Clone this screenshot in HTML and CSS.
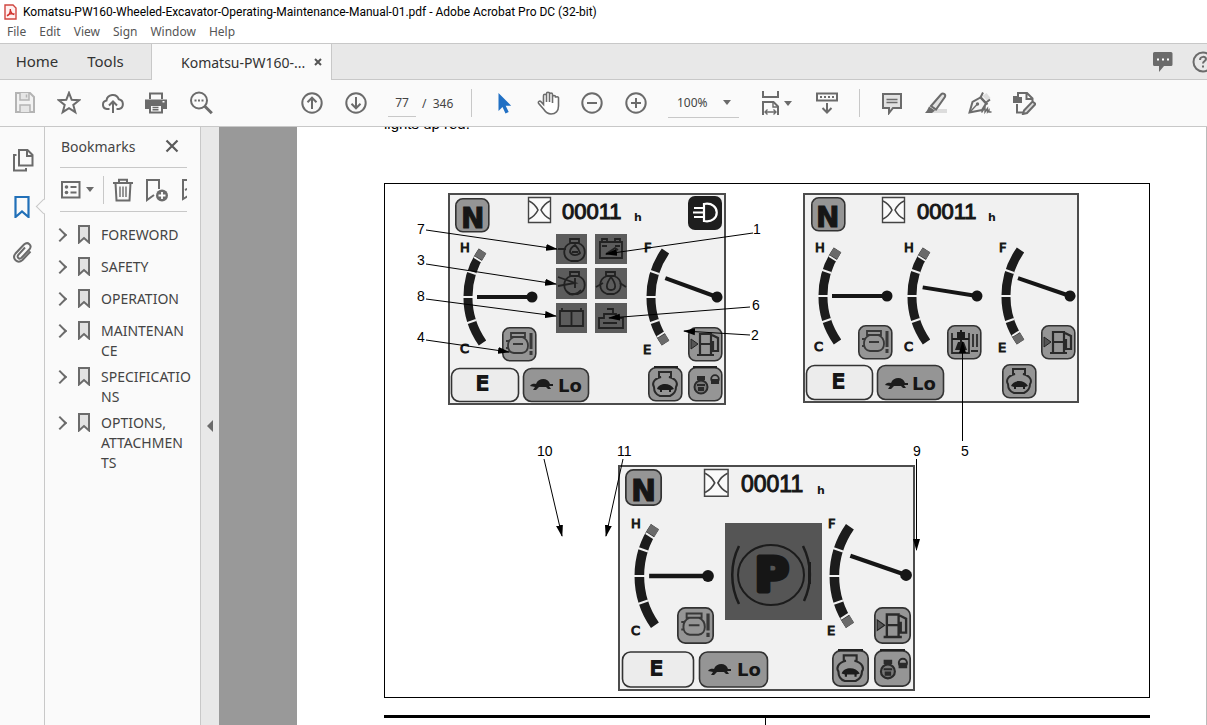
FILE: index.html
```html
<!DOCTYPE html>
<html lang="en">
<head>
<meta charset="utf-8">
<title>Komatsu-PW160-Wheeled-Excavator-Operating-Maintenance-Manual-01.pdf - Adobe Acrobat Pro DC (32-bit)</title>
<link rel="stylesheet" href="styles.css">
</head>
<body>
<div class="app">
  <header class="titlebar">
    <svg class="app-icon" width="13" height="16" viewBox="0 0 13 16"><path d="M1 1h8l3 3v11H1z" fill="#fff0f0" stroke="#d0453f" stroke-width="1.4"/><path d="M3 12c2-1 3.500-4 3.300-7M6.300 5c0 3 2 5.500 4 5.500M3 11.500c2-1.500 5-2.200 7.500-1.500" fill="none" stroke="#d0302a" stroke-width="1.300"/></svg>
    <span>Komatsu-PW160-Wheeled-Excavator-Operating-Maintenance-Manual-01.pdf - Adobe Acrobat Pro DC (32-bit)</span>
  </header>
  <nav class="menubar" aria-label="Menu">
    <button>File</button><button>Edit</button><button>View</button><button>Sign</button><button>Window</button><button>Help</button>
  </nav>
  <div class="tabbar">
    <button class="home">Home</button>
    <button class="tools">Tools</button>
    <div class="doc-tab">
      <button class="doc-name">Komatsu-PW160-...</button>
      <button class="tab-close" aria-label="Close tab"><svg width="8" height="8" viewBox="0 0 8 8"><path d="M1 1l6 6M7 1L1 7" stroke="#555" stroke-width="2"/></svg></button>
    </div>
    <div class="tab-actions">
      <button aria-label="Comments"><svg width="22" height="22" viewBox="0 0 22 22"><path d="M2 1h17a1.500 1.500 0 0 1 1.500 1.500v11A1.500 1.500 0 0 1 19 15h-7l-5 6v-6H2.500A1.500 1.500 0 0 1 1 13.500v-11A1.500 1.500 0 0 1 2.500 1z" fill="#6b6b6b"/><path d="M5 7.500h2v2H5zM10 7.500h2v2h-2zM15 7.500h2v2h-2z" fill="#fff"/></svg></button>
      <button aria-label="Help"><svg width="22" height="22" viewBox="0 0 22 22"><circle cx="11" cy="11" r="9.500" fill="none" stroke="#6b6b6b" stroke-width="2"/><path d="M8 9c0-4 6-4 6-1 0 2-3 2-3 4.500M11 14.500v2" fill="none" stroke="#6b6b6b" stroke-width="2"/></svg></button>
    </div>
  </div>

  <div class="toolbar" role="toolbar">
    <div class="group file-group">
      <button class="tool" aria-label="Save"><svg class="ico" viewBox="0 0 24 24"><path d="M3 2h14l4 4v15H3z" fill="#f2f2f2" stroke="#b4b4b4" stroke-width="2"/><path d="M7 2v7h9V2M7 21v-7h10v7" fill="#e6e6e6" stroke="#b4b4b4" stroke-width="1.500"/><path d="M13.500 3.500v3" stroke="#b4b4b4" stroke-width="1.500"/></svg></button>
      <button class="tool" aria-label="Star"><svg class="ico" viewBox="0 0 24 24"><path class="line" d="M12 1.800l2.700 7 7.500.4-5.900 4.700 2 7.300L12 17.100l-6.300 4.100 2-7.300-5.900-4.700 7.500-.4z"/></svg></button>
      <button class="tool" aria-label="Upload"><svg class="ico" viewBox="0 0 24 24"><path class="line" d="M8.500 18H5.800A4.300 4.300 0 0 1 5.500 9.500 6.300 6.300 0 0 1 17.700 8.200 5 5 0 0 1 18 18h-2.500M12 22V11M8 14.500l4-4 4 4"/></svg></button>
      <button class="tool" aria-label="Print"><svg class="ico" viewBox="0 0 24 24"><path class="fill" d="M4 1.500h14V8H4zM0 8.500h22V18h-4v-4.500H4V18H0z"/><path d="M6 3.500h10V8H6z" fill="#fafafa"/><path d="M5 14h12v7.500H5z" fill="#fafafa" stroke="#6b6b6b" stroke-width="2"/><path class="thin" d="M7.500 16.500h6M7.500 18.800h6"/><path d="M17.500 10h2v1.500h-2z" fill="#fff"/></svg></button>
      <button class="tool" aria-label="Search"><svg class="ico" viewBox="0 0 24 24"><circle class="line" cx="10" cy="9.500" r="8"/><path d="M15.800 15.300l7 7" stroke="#6b6b6b" stroke-width="3"/><path class="fill" d="M5.500 8.500h2v2h-2zM9 8.500h2v2H9zM12.500 8.500h2v2h-2z"/></svg></button>
    </div>
    <div class="group">
      <button class="tool" aria-label="Previous page"><svg class="ico" viewBox="0 0 24 24"><circle class="line" cx="12" cy="12" r="9.700"/><path class="line" d="M12 18V7M7.500 11.200L12 6.700l4.500 4.500"/></svg></button>
      <button class="tool" aria-label="Next page"><svg class="ico" viewBox="0 0 24 24"><circle class="line" cx="12" cy="12" r="9.700"/><path class="line" d="M12 6v11M7.500 12.800l4.500 4.500 4.500-4.500"/></svg></button>
    </div>
    <label class="page-field"><input type="text" value="77" aria-label="Page number"><span>/&nbsp; 346</span></label>
    <span class="divider"></span>
    <div class="group">
      <button class="tool" aria-label="Select"><svg class="ico" viewBox="0 0 24 24"><path d="M6.500 2v18l4-4 3 6.500 3.200-1.500-3-6.200h5.500z" fill="#2170c4"/></svg></button>
      <button class="tool" aria-label="Hand"><svg class="ico" viewBox="0 0 24 24"><path class="hand" d="M7.500 13.500V4.800c0-2 3-2 3 0V11 2.800c0-2 3-2 3 0V11 3.500c0-2 3-2 3 0V12 6c0-2 3-2 3 0l.5 0c2-.8 2.800.3 2.500 2V15c0 5-3 8-7.500 8-4 0-5.500-2-7.500-5l-5-5.800c-.8-1.500 1.200-2.700 2.500-1.500z"/></svg></button>
      <button class="tool" aria-label="Zoom out"><svg class="ico" viewBox="0 0 24 24"><circle class="line" cx="12" cy="12" r="9.700"/><path class="line" d="M7 12h10"/></svg></button>
      <button class="tool" aria-label="Zoom in"><svg class="ico" viewBox="0 0 24 24"><circle class="line" cx="12" cy="12" r="9.700"/><path class="line" d="M7 12h10M12 7v10"/></svg></button>
    </div>
    <div class="zoom-field"><select aria-label="Zoom level"><option>100%</option></select><span class="caret"></span></div>
    <button class="tool fit" aria-label="Fit width"><svg class="ico" viewBox="0 0 24 24"><path class="line" d="M4 0v6h15V0M4 24V11h10.500l4.500 4.500V24"/><path class="thin" d="M14 11v5h5M6 21h11M8.500 18.500L6 21l2.500 2.500M14.500 18.500L17 21l-2.500 2.500"/></svg><span class="caret"></span></button>
    <button class="tool" aria-label="Read mode"><svg class="ico" viewBox="0 0 24 24"><path class="line" d="M2 2.500h20v7H2zM12 12v9M7.500 17l4.500 4.500 4.500-4.500"/><path class="fill" d="M5 5h2v2H5zM9 5h2v2H9zM13 5h2v2h-2zM17 5h2v2h-2z"/></svg></button>
    <span class="divider"></span>
    <div class="group">
      <button class="tool" aria-label="Comment"><svg class="ico" viewBox="0 0 24 24"><path d="M3 3h18v14h-8l-4 5v-5H3z" fill="#e2e2e2" stroke="#6b6b6b" stroke-width="2"/><path class="thin" d="M6.500 8.500h11M6.500 11.500h11"/></svg></button>
      <button class="tool" aria-label="Highlight"><svg class="ico" viewBox="0 0 24 24"><path d="M10 18h13v4H8z" fill="#dcdcdc"/><path d="M7 15L17 3.500c2-2 5-.3 4 2.300L12 18.500z" fill="#e2e2e2" stroke="#6b6b6b" stroke-width="2"/><path class="fill" d="M5 15.500l6 4-3 2.500H1l2-2.500z"/></svg></button>
      <button class="tool" aria-label="Sign"><svg class="ico" viewBox="0 0 24 24"><path d="M14.500 5l4-3 4 5-3 3z" fill="#ddd"/><path d="M1.500 21.500l3-10.500 8-4.500 5.500 6-4 6.500z" fill="#f4f4f4" stroke="#6b6b6b" stroke-width="2"/><path class="line" d="M12.500 6.500L15 1.500M17.500 12l4.500-3.500M12 5.500l7.500 8"/><path class="thin" d="M2 21l7-7.500"/><circle class="fill" cx="9.500" cy="13" r="1.700"/><path class="thin" d="M13.500 21.500l3.500-5v4.500l2.500-3.500v3.500l1.500-2v2h2.500"/></svg></button>
      <button class="tool" aria-label="Edit tools"><svg class="ico" viewBox="0 0 24 24"><path class="line" d="M6 6V2h9l5.500 5.500V10M14.500 2.500V8h5.500M5 13v8.500h6"/><path class="fill" d="M1 5h5l1 1h3v6H1z"/><path d="M12 19.500l8.500-9 3 2.500-8.500 9-4 1z" fill="#ddd" stroke="#6b6b6b" stroke-width="2"/></svg></button>
    </div>
  </div>

  <div class="workspace">
    <nav class="rail" aria-label="Panels">
      <button aria-label="Page thumbnails"><svg class="ico" viewBox="0 0 24 24"><path class="line" d="M9 2h8.500l5 5v10.500H9zM17 2.500V8h5.500M6.500 7H4v15.500h12V20"/></svg></button>
      <button class="current" aria-label="Bookmarks"><svg class="ico" viewBox="0 0 24 24"><path d="M5.500 3h13v20L12 17.500 5.500 23z" fill="#fafafa" stroke="#2170b8" stroke-width="2.200"/></svg></button>
      <button aria-label="Attachments"><svg class="ico" viewBox="0 0 24 24"><path class="line" d="M20.500 11.500L12.500 20c-5 4.500-11-1.500-7-6.500l8.500-9c4-3.500 8.500 1 5.500 4.800l-8 8.500c-2.500 2-5-.5-3.200-3l6.700-7.300"/></svg></button>
    </nav>
    <aside class="panel">
      <div class="panel-head"><h2>Bookmarks</h2><button aria-label="Close panel"><svg width="14" height="14" viewBox="0 0 14 14"><path d="M1.500 1.500l11 11M12.500 1.500l-11 11" stroke="#5a5a5a" stroke-width="2.200"/></svg></button></div>
      <div class="panel-tools">
        <button class="options" aria-label="Options"><svg width="20" height="18" viewBox="0 0 20 18"><path class="line" d="M1 1h17.500v15.500H1z"/><circle class="fill" cx="5.500" cy="6" r="1.800"/><circle class="fill" cx="5.500" cy="11.500" r="1.800"/><path class="line" d="M9.500 6h6M9.500 11.500h6"/></svg><span class="caret"></span></button>
        <span class="sep"></span>
        <button aria-label="Delete"><svg width="20" height="24" viewBox="0 0 20 24"><path class="line" d="M0 5h20M6 5V1.800h8V5M2.500 5l1 17.500h13l1-17.500"/><path class="thin" d="M7 8.500V19M10 8.500V19M13 8.500V19"/></svg></button>
        <button class="add" aria-label="New bookmark"><svg width="24" height="24" viewBox="0 0 24 24"><path class="line" d="M9 17l-7 5V2h12v9"/><circle class="fill" cx="17" cy="17.500" r="6"/><path d="M13.500 17.500h7M17 14v7" stroke="#fff" stroke-width="1.800"/></svg></button>
        <button class="find" aria-label="Find bookmark"><svg width="16" height="24" viewBox="0 0 16 24"><path class="line" d="M8 17l-7 4V2h12v9M3 12l4-2"/></svg></button>
      </div>
      <ul class="tree">
        <li><button class="twist" aria-label="Expand"></button><svg class="mark" viewBox="0 0 12 19"><path d="M1 1h10v16.500l-5-4.500-5 4.500z"/></svg><a href="#">FOREWORD</a></li>
        <li><button class="twist" aria-label="Expand"></button><svg class="mark" viewBox="0 0 12 19"><path d="M1 1h10v16.500l-5-4.500-5 4.500z"/></svg><a href="#">SAFETY</a></li>
        <li><button class="twist" aria-label="Expand"></button><svg class="mark" viewBox="0 0 12 19"><path d="M1 1h10v16.500l-5-4.500-5 4.500z"/></svg><a href="#">OPERATION</a></li>
        <li><button class="twist" aria-label="Expand"></button><svg class="mark" viewBox="0 0 12 19"><path d="M1 1h10v16.500l-5-4.500-5 4.500z"/></svg><a href="#">MAINTENAN<wbr>CE</a></li>
        <li><button class="twist" aria-label="Expand"></button><svg class="mark" viewBox="0 0 12 19"><path d="M1 1h10v16.500l-5-4.500-5 4.500z"/></svg><a href="#">SPECIFICATIO<wbr>NS</a></li>
        <li><button class="twist" aria-label="Expand"></button><svg class="mark" viewBox="0 0 12 19"><path d="M1 1h10v16.500l-5-4.500-5 4.500z"/></svg><a href="#">OPTIONS, ATTACHMEN<wbr>TS</a></li>
      </ul>
    </aside>
    <button class="collapse" aria-label="Collapse panel"></button>
    <main class="viewer">
      <article class="sheet">
        <p>lights up red.</p>
        <svg class="figure" viewBox="384 183 766 515" role="img" aria-label="Monitor panel displays">
          <defs>
            <marker id="tip" markerUnits="userSpaceOnUse" markerWidth="12" markerHeight="8" refX="11" refY="4" orient="auto"><path d="M0 .5L12 4 0 7.500z"/></marker>
            <g id="arc">
              <path d="M-65.500-46A80 80 0 0 0-65.500 46" fill="none" stroke="#1c1c1c" stroke-width="9"/>
              <path d="M-72-23l-10-3.500M-74 0h-12M-72 23l-10 3.500" stroke="#f1f1f1" stroke-width="2"/>
            </g>
            <g id="gauge-hot"><use href="#arc"/><path d="M-65.500-46l-4.200 7" stroke="#6a6a6a" stroke-width="9"/><path d="M-66-35l-8-5" stroke="#f1f1f1" stroke-width="2"/></g>
            <g id="gauge-fuel"><use href="#arc"/><path d="M-65.500 46l-4.200-7" stroke="#6a6a6a" stroke-width="9"/><path d="M-66 35l-8 5" stroke="#f1f1f1" stroke-width="2"/></g>
            <g id="needle"><path d="M-55 0H0" stroke="#161616" stroke-width="4"/><circle r="5.500" fill="#161616"/></g>
            <rect id="key" x=".8" y=".8" width="33" height="33" rx="7" fill="#959595" stroke="#333" stroke-width="1.600"/>
            <g id="hourglass" fill="none" stroke="#444"><path d="M.5.5h22v25H.5z" stroke-width="1.400" fill="#fafafa"/><path d="M1 4c4 2 7 5 9 9-2 4-5 7-9 9M22 4c-4 2-7 5-9 9 2 4 5 7 9 9" stroke-width="1.600"/></g>
            <g id="temp"><use href="#key"/><path d="M9 6h14v4H9zM12 10c-8 3-8 15 0 16h8c8-1 8-13 0-16M4 14h3M4 21h3M11 17h10" fill="none" stroke="#383838" stroke-width="1.800"/><path d="M29 6v16M29 24v4" stroke="#383838" stroke-width="3"/></g>
            <g id="oil"><use href="#key"/><path d="M5 8v20h17V8M24 26h7M26 9v13M30 9v13" fill="none" stroke="#2a2a2a" stroke-width="1.800"/><path d="M10 7h8v6h-8zM11 17h6l3 8H8z" fill="#1c1c1c"/><path d="M5 14h17M14 5v14" stroke="#1c1c1c" stroke-width="2"/></g>
            <g id="fuel"><use href="#key"/><path d="M12 7h11v21H12zM12 17h11M9 28h17M24 8l6 3v13h-5V15h-2" fill="none" stroke="#2a2a2a" stroke-width="2.200"/><path d="M3 12l7 5-7 5z" fill="#555" stroke="#222"/></g>
            <g id="engine"><use href="#key"/><path d="M11 5h12v5h-2c8 2 9 7 7 10 0 6-4 8-6 9H12c-3-1-6-4-6-9-2-3-1-8 7-10h-2z" fill="none" stroke="#2a2a2a" stroke-width="2"/><path d="M9 22c2-6 13-7 17 0l-3 1v2h-2v-2h-7v2h-2v-2z" fill="#1c1c1c"/></g>
            <g id="locks"><use href="#key"/><circle cx="13" cy="20" r="6.500" fill="#777" stroke="#2a2a2a" stroke-width="2"/><path d="M9 9h8v4H9zM9 17h8v2H9zM10 20h6v4h-6zM23 12h8v5h-8z" fill="#2a2a2a"/><circle cx="27" cy="12" r="3.800" fill="none" stroke="#2a2a2a" stroke-width="1.800"/></g>
            <path id="turtle" d="M0 8c2-3 5-2 6-2 2-6 12-7 14 0h3v2h-4l2 3h-3l-2-2H9l-3 3H3l2-3z" fill="#1c1c1c"/>
            <g id="motor" fill="none" stroke="#222" stroke-width="1.800"><path d="M13 5h9v4h-9zM14 9c-9 3-9 15 0 18h7c9-3 9-15 0-18z"/></g>
          </defs>

          <rect x="384.500" y="183.500" width="765" height="514" fill="#fff" stroke="#000"/>

          <!-- display with warning lamps -->
          <rect class="screen" x="449" y="194" width="276" height="210"/>
          <use href="#key" x="455" y="198"/><text class="lcd n" x="461" y="228">N</text>
          <use href="#hourglass" x="528" y="197"/>
          <text class="digits" x="562" y="219">00011</text><text class="lcd h" x="634" y="221">h</text>
          <rect x="688" y="196" width="34" height="34" rx="7" fill="#1e1e1e"/>
          <path d="M704 204c17-3 17 20 0 17zM694 208h9M693 212.500h10M694 217h9" fill="none" stroke="#fff" stroke-width="2.200"/>
          <text class="lcd s" x="460" y="252">H</text><text class="lcd s" x="460" y="353">C</text>
          <text class="lcd s" x="644" y="252">F</text><text class="lcd s" x="643" y="354">E</text>
          <use href="#gauge-hot" transform="translate(548 297)"/><use href="#needle" transform="translate(532 297)"/>
          <use href="#gauge-fuel" transform="translate(731 297)"/><use href="#needle" transform="translate(717 297) rotate(20)"/>
          <g class="lamp">
            <path d="M556 234h31v30h-31zM595 234h32v30h-32zM556 268h31v31h-31zM595 268h32v31h-32zM556 303h31v30h-31zM595 303h32v30h-32z"/>
          </g>
          <use href="#motor" x="557" y="234"/><path class="lamp-line" d="M558 249h8M570 252c0-4 5-7 5-7s4 4 5 8c-3 3-8 3-10-1zM572 252h6"/>
          <path class="lamp-line" d="M600 242h22v16h-22zM602 239h5v3h-5zM615 239h5v3h-5zM602 246h5M615 246h5M606 254l9-6 3 2"/>
          <use href="#motor" x="557" y="267"/><path class="lamp-line" d="M558 277l17 6-17 3M567 292c3 4 10 3 14-2M575 278v10"/>
          <use href="#motor" x="593" y="267"/><path class="lamp-line" d="M596 287l7-4M626 287l-6-4M611 277c-6 8-5 13 0 13s6-5 0-13"/>
          <path class="lamp-line" d="M560 311h23v15h-23zM571.500 311v15M562 308v3M581 308v3"/>
          <path class="lamp-line" d="M599 318h5v-4h12v4h7v10h-24zM607 309h6v5M603 323h14"/>
          <use href="#temp" transform="translate(502 327)"/><use href="#fuel" transform="translate(688 327)"/>
          <rect class="eco" x="451.500" y="368.500" width="67" height="33" rx="8"/><text class="lcd e" x="476" y="390">E</text>
          <rect class="slow" x="523.500" y="368.500" width="65" height="33" rx="8"/><use href="#turtle" x="530" y="378"/><text class="lcd lo" x="558" y="392">Lo</text>
          <use href="#engine" x="648" y="367"/><use href="#locks" x="688" y="367"/><path d="M654 367h24M693 367h24" stroke="#222" stroke-width="2"/>

          <!-- display with three gauges -->
          <rect class="screen" x="804" y="194" width="274" height="208"/>
          <use href="#key" x="811" y="197"/><text class="lcd n" x="816" y="227">N</text>
          <use href="#hourglass" x="882" y="197"/>
          <text class="digits" x="917" y="219">00011</text><text class="lcd h" x="988" y="221">h</text>
          <text class="lcd s" x="815" y="252">H</text><text class="lcd s" x="814" y="351">C</text>
          <text class="lcd s" x="904" y="252">H</text><text class="lcd s" x="904" y="351">C</text>
          <text class="lcd s" x="999" y="252">F</text><text class="lcd s" x="998" y="352">E</text>
          <use href="#gauge-hot" transform="translate(903 296)"/><use href="#needle" transform="translate(887 296)"/>
          <use href="#gauge-hot" transform="translate(992 296)"/><use href="#needle" transform="translate(977 296) rotate(9)"/>
          <use href="#gauge-fuel" transform="translate(1086 296)"/><use href="#needle" transform="translate(1070 296) rotate(19)"/>
          <use href="#temp" x="858" y="325"/><use href="#oil" x="947" y="325"/><use href="#fuel" x="1041" y="325"/>
          <rect class="eco" x="806.500" y="365.500" width="66" height="34" rx="8"/><text class="lcd e" x="832" y="388">E</text>
          <rect class="slow" x="877.500" y="365.500" width="66" height="34" rx="8"/><use href="#turtle" x="885" y="377"/><text class="lcd lo" x="912" y="390">Lo</text>
          <use href="#engine" x="1002" y="364"/>

          <!-- display with parking brake lamp -->
          <rect class="screen" x="619" y="466" width="295" height="224"/>
          <use href="#key" transform="translate(625 469) scale(1.070)"/><text class="lcd n3" x="631" y="501">N</text>
          <use href="#hourglass" transform="translate(704 469) scale(1.070)"/>
          <text class="digits d3" x="741" y="492">00011</text><text class="lcd h" x="817" y="494">h</text>
          <text class="lcd s" x="631" y="528">H</text><text class="lcd s" x="631" y="635">C</text>
          <text class="lcd s" x="828" y="528">F</text><text class="lcd s" x="827" y="635">E</text>
          <use href="#gauge-hot" transform="translate(725 576) scale(1.070)"/><use href="#needle" transform="translate(708 576) scale(1.070)"/>
          <use href="#gauge-fuel" transform="translate(920 576) scale(1.070)"/><use href="#needle" transform="translate(906 575) rotate(19) scale(1.070)"/>
          <rect x="725" y="523" width="97" height="97" fill="#555"/>
          <ellipse cx="771" cy="575" rx="33" ry="30" fill="none" stroke="#1c1c1c" stroke-width="2"/>
          <path d="M739 546c-9 18-9 40 0 58M803 546c9 18 9 38 1 55" fill="none" stroke="#1c1c1c" stroke-width="2.500"/><path d="M809.500 562v22" stroke="#1c1c1c" stroke-width="3"/>
          <text class="lcd park" x="755" y="591">P</text>
          <use href="#temp" transform="translate(677 607) scale(1.070)"/><use href="#fuel" transform="translate(874 607) scale(1.070)"/>
          <rect class="eco" x="622.500" y="652" width="71" height="35" rx="8"/><text class="lcd e" x="650" y="675">E</text>
          <rect class="slow" x="699.500" y="652" width="68" height="35" rx="8"/><use href="#turtle" x="708" y="663"/><text class="lcd lo" x="737" y="676">Lo</text>
          <use href="#engine" transform="translate(832 650) scale(1.070)"/><use href="#locks" transform="translate(874 650) scale(1.070)"/><path d="M838 650h25M880 650h25" stroke="#222" stroke-width="2"/>

          <!-- callouts -->
          <g class="leader">
            <path d="M426 230L557 249"/><path d="M426 264L556 284"/><path d="M426 299L556 316"/><path d="M426 340L509 352"/>
            <path d="M753 233L606 254"/><path d="M750 307L609 318"/><path d="M750 335L684 331"/>
            <path d="M962.500 441V342"/><path d="M544 459L562 536"/><path d="M623 459L606 536"/><path d="M916.500 459V550"/>
          </g>
          <g class="num">
            <text x="417" y="234">7</text><text x="417" y="265">3</text><text x="417" y="301">8</text><text x="417" y="342">4</text>
            <text x="753" y="234">1</text><text x="752" y="310">6</text><text x="751" y="340">2</text><text x="961" y="456">5</text>
            <text x="537" y="456">10</text><text x="617" y="456">11</text><text x="913" y="456">9</text>
          </g>
        </svg>
        <div class="columns"><div></div><div></div></div>
      </article>
    </main>
  </div>
</div>
</body>
</html>
```
FILE: styles.css
```css
* { box-sizing: border-box; }
body { margin: 0; font-family: "Noto Sans", "Open Sans", sans-serif; color: #444; background: #fafafa; }
button { border: 0; padding: 0; background: none; color: inherit; font: inherit; display: flex; align-items: center; justify-content: center; }
.app { display: flex; flex-direction: column; height: 100vh; overflow: hidden; }

.titlebar { display: flex; align-items: center; gap: 6px; height: 23px; padding-left: 4px; background: #fff; color: #000; font-family: Roboto, "Noto Sans", sans-serif; font-size: 12px; white-space: nowrap; }
.menubar { display: flex; align-items: flex-start; gap: 13px; height: 20px; padding-left: 7px; background: #fff; font-size: 12px; color: #555; }
.menubar button { line-height: 18px; }

.tabbar { display: flex; height: 37px; flex: none; background: #e8e8e8; border-top: 1px solid #c8c8c8; font-size: 15px; color: #333; }
.tabbar > * { border-bottom: 1px solid #c8c8c8; }
.tabbar > .home, .tabbar > .tools { flex: none; padding-bottom: 1px; }
.home { width: 72px; padding-left: 2px; }
.tools { width: 79px; padding-right: 12px; }
.doc-tab { display: flex; flex: none; align-items: center; justify-content: space-between; width: 181px; padding: 0 9px 0 29px; background: #fafafa; border-left: 1px solid #c8c8c8; border-right: 1px solid #c8c8c8; font-size: 14px; }
.tabbar > .doc-tab { border-bottom: 0; }
.tab-actions { display: flex; flex: 1; justify-content: flex-end; gap: 18px; overflow: hidden; }
.tab-actions button { flex: none; }
.tab-actions svg { flex: none; }
.tab-actions button:last-child { width: 15px; justify-content: flex-start; overflow: hidden; }

.toolbar { display: flex; flex: none; align-items: center; height: 47px; border-bottom: 1px solid #c8c8c8; background: #fafafa; font-size: 12px; color: #444; padding-left: 3px; }
.group { display: flex; }
.file-group { margin-right: 67px; }
.tool { width: 44px; height: 40px; flex: none; }
.ico { width: 24px; height: 24px; flex: none; }
.line { fill: none; stroke: #6b6b6b; stroke-width: 2; }
.thin { fill: none; stroke: #6b6b6b; stroke-width: 1.4; }
.fill { fill: #6b6b6b; }
.hand { fill: #fff; stroke: #6b6b6b; stroke-width: 1.6; }
.page-field { display: flex; align-items: center; gap: 6px; margin-left: 10px; width: 83px; white-space: nowrap; }
.page-field input { width: 28px; height: 28px; border: 0; border-bottom: 1px solid #c8c8c8; background: none; font: inherit; color: inherit; padding: 0; text-align: center; }
.divider { width: 1px; height: 28px; background: #c8c8c8; margin-right: 10px; flex: none; }
.caret { width: 0; height: 0; flex: none; border: 4px solid transparent; border-top: 5px solid #6b6b6b; border-bottom: 0; }
.zoom-field { display: flex; align-items: center; width: 71px; margin: 0 14px 0 10px; border-bottom: 1px solid #c8c8c8; }
.zoom-field select { flex: 1; appearance: none; border: 0; background: none; font: inherit; color: inherit; height: 28px; padding: 0 0 0 9px; }
.zoom-field .caret { margin-right: 8px; }
.tool.fit { margin-right: 8px; gap: 1px; }
.tool + .divider { margin-left: 10px; }

.workspace { display: flex; flex: 1; min-height: 0; }
.rail { display: flex; flex-direction: column; align-items: center; gap: 22px; width: 45px; padding-top: 21px; border-right: 1px solid #c8c8c8; flex: none; }
.rail .current { position: relative; width: 44px; }
.rail .current::after { content: ""; position: absolute; right: -5px; top: 7px; width: 10px; height: 10px; border: 1px solid #c8c8c8; border-width: 0 0 1px 1px; background: #fafafa; transform: rotate(45deg); }
.panel { width: 156px; flex: none; padding: 0 13px 0 15px; border-right: 1px solid #c8c8c8; }
.panel-head { display: flex; align-items: center; justify-content: space-between; height: 41px; padding: 0 8px 2px 1px; border-bottom: 1px solid #c8c8c8; }
.panel-head h2 { margin: 0; font-size: 14px; font-weight: 400; }
.panel-tools { display: flex; align-items: center; height: 44px; overflow: hidden; border-bottom: 1px solid #c8c8c8; gap: 9px; }
.panel-tools button { flex: none; }
.panel-tools .options { gap: 5px; padding-left: 1px; }
.panel-tools .add { margin-left: 3px; }
.panel-tools .find { margin-left: 4px; }
.panel-tools .sep { width: 1px; height: 28px; flex: none; background: #c8c8c8; }
.tree { list-style: none; margin: 0 -6px 0 0; padding: 10px 0 0; font-size: 14px; line-height: 20px; }
.tree li { display: flex; min-height: 32px; padding: 3px 0; }
.tree li:nth-child(n+4) { min-height: 46px; }
.tree a { color: #444; text-decoration: none; flex: 1; }
.twist { width: 8px; height: 20px; flex: none; }
.twist::before { content: ""; width: 8px; height: 8px; border: 2px solid #6b6b6b; border-width: 2px 2px 0 0; transform: rotate(45deg); flex: none; margin-right: 8px; }
.mark { width: 12px; height: 19px; margin: 0 11px 0 10px; flex: none; fill: #e2e2e2; stroke: #6b6b6b; stroke-width: 2; }
.collapse { width: 18px; flex: none; background: #e8e8e8; }
.collapse::before { content: ""; border: 6px solid transparent; border-right-color: #6b6b6b; border-left: 0; }

.viewer { flex: 1; min-width: 0; padding-left: 78px; background: #999; overflow: hidden; }
.sheet { height: 100%; overflow: hidden; padding: 0 56px 0 87px; background: #fff; border-right: 1px solid #bbb; color: #000; font-family: "Liberation Sans", Arial, sans-serif; }
.sheet p { margin: -12px 0 50px; font-size: 15px; line-height: 18px; }
.figure { display: block; width: 100%; height: auto; }
.columns { display: grid; grid-template-columns: 381fr 385fr; height: 40px; margin-top: 17px; border-top: 3px solid #000; }
.columns div + div { border-left: 1px solid #000; }

.screen { fill: #f1f1f1; stroke: #4c4c4c; stroke-width: 2; }
.lcd { font-family: "DejaVu Sans", sans-serif; font-weight: 700; fill: #161616; stroke: #161616; stroke-width: 0; }
.n { font-size: 28px; stroke-width: 1; }
.n3 { font-size: 30px; stroke-width: 1; }
.s { font-size: 13px; font-weight: 400; stroke-width: 1; }
.h { font-size: 11px; }
.e { font-size: 20px; font-weight: 400; stroke-width: 2; }
.lo { font-size: 18px; }
.park { font-size: 46px; stroke-width: 5; stroke-linejoin: round; }
.digits { font-family: "Liberation Sans", sans-serif; font-size: 22px; fill: #161616; stroke: #161616; stroke-width: 1; }
.d3 { font-size: 23px; }
.eco { fill: #ececec; stroke: #333; stroke-width: 1.6; }
.slow { fill: #959595; stroke: #333; stroke-width: 1.6; }
.lamp { fill: #5c5c5c; }
.lamp-line { fill: none; stroke: #222; stroke-width: 1.8; }
.leader path { stroke: #000; fill: none; marker-end: url(#tip); }
.num { font-size: 14px; fill: #000; }
```
